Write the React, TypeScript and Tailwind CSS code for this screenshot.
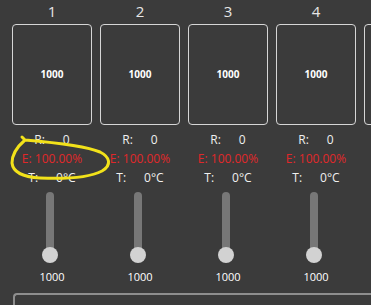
const channels = [1, 2, 3, 4];

function Channel({ n }: { n: number }) {
  return (
    <div className="w-[80px] shrink-0 flex flex-col items-center">
      <div className="h-[24px] pb-[1px] flex items-center justify-center text-[15px] text-[#e6e6e6]">{n}</div>
      <div className="w-full h-[101px] rounded-[4px] border-[1.5px] border-[#d6d6d6] flex items-center justify-center">
        <span className="text-[10px] font-bold text-white">1000</span>
      </div>
      <div className="mt-[5px] flex flex-col items-center text-[12px] leading-[19px]">
        <div className="flex gap-[18px] text-[#f0f0f0]">
          <span>R:</span>
          <span>0</span>
        </div>
        <div className="text-[#e0282a]">E: 100.00%</div>
        <div className="flex gap-[18px] text-[#f0f0f0]">
          <span>T:</span>
          <span>0°C</span>
        </div>
      </div>
      <div className="mt-[5px] flex flex-col items-center pr-[4px]">
        <div className="w-[8px] h-[63px] rounded-full bg-[#777777]" />
        <div className="-mt-[8px] w-[16px] h-[16px] rounded-full bg-[#d2d2d2]" />
      </div>
      <div className="mt-[6px] text-[11px] text-white">1000</div>
    </div>
  );
}

export default function App() {
  return (
    <div className="relative w-[371px] h-[305px] overflow-hidden bg-[#3b3b3b]" style={{ fontFamily: '"Open Sans", "Noto Sans", sans-serif' }}>
      <div className="flex gap-[8px] pl-[12px]">
        {channels.map((n) => (
          <Channel key={n} n={n} />
        ))}
        {/* next channel, cut off at the window edge */}
        <div className="w-[80px] shrink-0 pt-[24px]">
          <div className="h-[101px] rounded-[4px] border-[1.5px] border-[#d6d6d6]" />
        </div>
      </div>

      {/* Bottom panel edge */}
      <div className="ml-[13px] mt-[7px] h-[20px] rounded-tl-[4px] border-t-2 border-l-2 border-[#8e8e8e]" />

      {/* Hand-drawn highlight */}
      <svg className="absolute left-0 top-0 pointer-events-none" width="371" height="305" viewBox="0 0 371 305">
        <path
          d="M22 137 L25 140 C18 146 12 154 12 163 C13 172 22 177 40 178 C62 179 88 178 102 171 C112 165 110 157 100 152 C86 146 60 143 25 140"
          fill="none"
          stroke="#f2e21a"
          strokeWidth="3"
          strokeLinecap="round"
          strokeLinejoin="round"
        />
      </svg>
    </div>
  );
}
